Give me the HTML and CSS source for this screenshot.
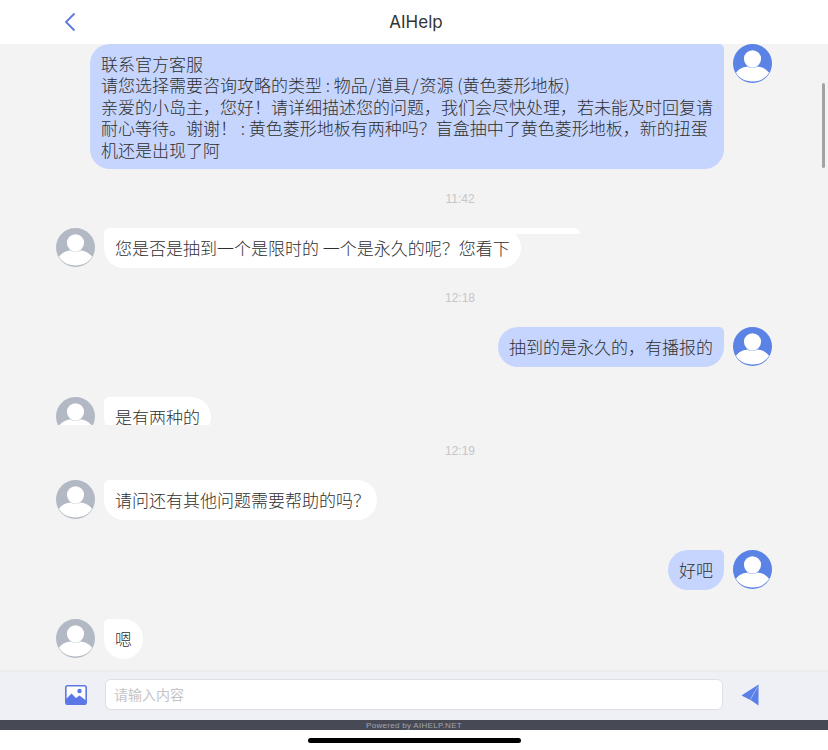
FILE: index.html
```html
<!DOCTYPE html>
<html lang="zh-CN">
<head>
    <meta charset="utf-8">
    <title>AIHelp</title>
    <link rel="stylesheet" href="styles.css">
</head>
<body>
<svg class="defs" width="0" height="0">
    <symbol id="avatar" viewBox="0 0 40 40">
        <circle cx="20" cy="20" r="20" fill="currentColor"/>
        <circle cx="20" cy="15.2" r="8.8" fill="#fff"/>
        <path d="M3 29.5 C6.5 24.5 12 23.2 15 23 C17 24.6 23 24.6 25 23 C28 23.2 33.5 24.5 37 29.5 C33.5 35.2 27.5 38.4 20 38.4 C12.5 38.4 6.5 35.2 3 29.5 Z" fill="#fff"/>
    </symbol>
</svg>
<div class="page">
    <header class="topbar">
        <svg class="back" width="12" height="20" viewBox="0 0 12 20"><path d="M10.5 1.5 L2 10 L10.5 18.5" fill="none" stroke="#5b78dc" stroke-width="1.8"/></svg>
        <div class="title">AIHelp</div>
    </header>
    <main class="chat">
        <div class="row me">
            <div class="bubble">联系官方客服<br>请您选择需要咨询攻略的类型 : 物品&#8202;/&#8202;道具&#8202;/&#8202;资源 (黄色菱形地板)<br>亲爱的小岛主，您好！请详细描述您的问题，我们会尽快处理，若未能及时回复请耐心等待。谢谢！ : 黄色菱形地板有两种吗？盲盒抽中了黄色菱形地板，新的扭蛋机还是出现了阿</div>
            <svg class="avatar"><use href="#avatar"/></svg>
        </div>
        <div class="time">11:42</div>
        <div class="row">
            <svg class="avatar gray"><use href="#avatar"/></svg>
            <div class="bubble has-strip">您是否是抽到一个是限时的 一个是永久的呢？您看下<span class="strip"></span></div>
        </div>
        <div class="time">12:18</div>
        <div class="row me">
            <div class="bubble">抽到的是永久的，有播报的</div>
            <svg class="avatar"><use href="#avatar"/></svg>
        </div>
        <div class="row cut">
            <svg class="avatar gray"><use href="#avatar"/></svg>
            <div class="bubble">是有两种的</div>
        </div>
        <div class="time short">12:19</div>
        <div class="row">
            <svg class="avatar gray"><use href="#avatar"/></svg>
            <div class="bubble">请问还有其他问题需要帮助的吗<span class="tight">？</span></div>
        </div>
        <div class="row me">
            <div class="bubble">好吧</div>
            <svg class="avatar"><use href="#avatar"/></svg>
        </div>
        <div class="row last">
            <svg class="avatar gray"><use href="#avatar"/></svg>
            <div class="bubble">嗯</div>
        </div>
        <div class="scrollbar"></div>
    </main>
    <footer class="inputbar">
        <svg class="pic" width="22" height="20" viewBox="0 0 22 20">
            <rect x="0.8" y="0.8" width="20.4" height="18.4" rx="2" fill="#fff" stroke="#5b78e6" stroke-width="1.6"/>
            <circle cx="14.5" cy="6" r="2.2" fill="#5b78e6"/>
            <path d="M1 18 L1 14 L6.5 8.5 L11 13 L14.5 10.5 L21 15.5 L21 18 Q21 19 20 19 L2 19 Q1 19 1 18 Z" fill="#5b78e6"/>
        </svg>
        <input class="msg" type="text" placeholder="请输入内容">
        <svg class="send" width="18" height="22" viewBox="0 0 19 23">
            <path d="M18.5 0.5 L18.5 22.5 L10.5 17 L0.5 12 Z" fill="#5b7fe8"/>
            <path d="M17.5 3 L10 16" fill="none" stroke="#a6b9f3" stroke-width="1"/>
        </svg>
    </footer>
    <div class="powered">Powered by AIHELP.NET</div>
    <div class="homebar"><div class="indicator"></div></div>
</div>
</body>
</html>
```

FILE: styles.css
```css
html, body {
  margin: 0;
  height: 100%;
  background: #fff;
}
body {
  font-family: "Noto Sans CJK SC", "Liberation Sans", sans-serif;
  overflow: hidden;
}
.defs {
  display: block;
  height: 0;
}
.page {
  display: flex;
  flex-direction: column;
  height: 750px;
}
.topbar {
  display: grid;
  grid-template-columns: 1fr auto 1fr;
  align-items: center;
  height: 44px;
  flex: none;
  background: #fff;
  padding-left: 64px;
  padding-right: 60px;
  box-sizing: border-box;
}
.title {
  font-family: Inter, "Liberation Sans", sans-serif;
  font-size: 17px;
  color: #333;
}
.chat {
  position: relative;
  height: 626px;
  flex: none;
  overflow: hidden;
  background: #f3f3f3;
  font-size: 17px;
  font-weight: 300;
  line-height: 21.5px;
  color: #2f2f2f;
}
.row {
  display: flex;
  gap: 9px;
  align-items: flex-start;
  padding-left: 56px;
  margin-top: 30px;
}
.row:first-child, .time + .row {
  margin-top: 0;
}
.row.me {
  justify-content: flex-end;
  padding-left: 0;
  padding-right: 56px;
}
.row.cut {
  height: 28px;
  overflow: hidden;
}
.row.last {
  margin-top: 29px;
}
.avatar {
  width: 39px;
  height: 39px;
  flex: none;
  color: #b3b9c4;
}
.me .avatar {
  color: #5b83e6;
}
.bubble {
  position: relative;
  max-width: 634px;
  min-height: 40px;
  box-sizing: border-box;
  padding: 8.5px 11px 9px;
  background: #fff;
  border-radius: 5px 20px 20px 20px;
}
.me .bubble {
  background: #c6d5fd;
  border-radius: 20px 5px 20px 20px;
}
.tight {
  letter-spacing: -4px;
}
.strip {
  position: absolute;
  top: 0;
  left: 100%;
  margin-left: -20px;
  width: 79px;
  height: 6px;
  background: #fff;
  border-radius: 0 6px 0 0;
}
.time {
  display: flex;
  align-items: center;
  justify-content: center;
  height: 59px;
  box-sizing: border-box;
  padding-top: 3px;
  padding-left: 92px;
  font-family: "Liberation Sans", sans-serif;
  font-size: 12px;
  font-weight: 400;
  color: #c6c6c6;
}
.time.short {
  height: 55px;
  padding-top: 0;
  padding-bottom: 1px;
}
.scrollbar {
  position: absolute;
  top: 39px;
  right: 3px;
  width: 3px;
  height: 85px;
  border-radius: 2px;
  background: #a3a3a3;
}
.inputbar {
  display: flex;
  align-items: center;
  height: 50px;
  flex: none;
  box-sizing: border-box;
  background: #eff0f5;
  border-top: 2px solid #ebebeb;
  padding-left: 65px;
  padding-bottom: 3px;
}
.pic {
  flex: none;
  margin-right: 18px;
}
.msg {
  width: 618px;
  height: 31px;
  box-sizing: border-box;
  flex: none;
  padding: 0 8px 1px;
  background: #fff;
  border: 1px solid #dcdfe6;
  border-radius: 6px;
  font-family: "Noto Sans CJK SC", sans-serif;
  font-size: 14px;
  outline: none;
}
.msg::placeholder {
  color: #c4c4c8;
}
.send {
  flex: none;
  margin-left: 18px;
}
.powered {
  height: 10px;
  flex: none;
  background: #474a55;
  color: #a2a5b0;
  font-family: "Liberation Sans", sans-serif;
  font-size: 8px;
  line-height: 11px;
  letter-spacing: 0.3px;
  text-align: center;
}
.homebar {
  display: flex;
  justify-content: center;
  padding-top: 8px;
}
.indicator {
  width: 213px;
  height: 5px;
  border-radius: 3px;
  background: #000;
}
```
